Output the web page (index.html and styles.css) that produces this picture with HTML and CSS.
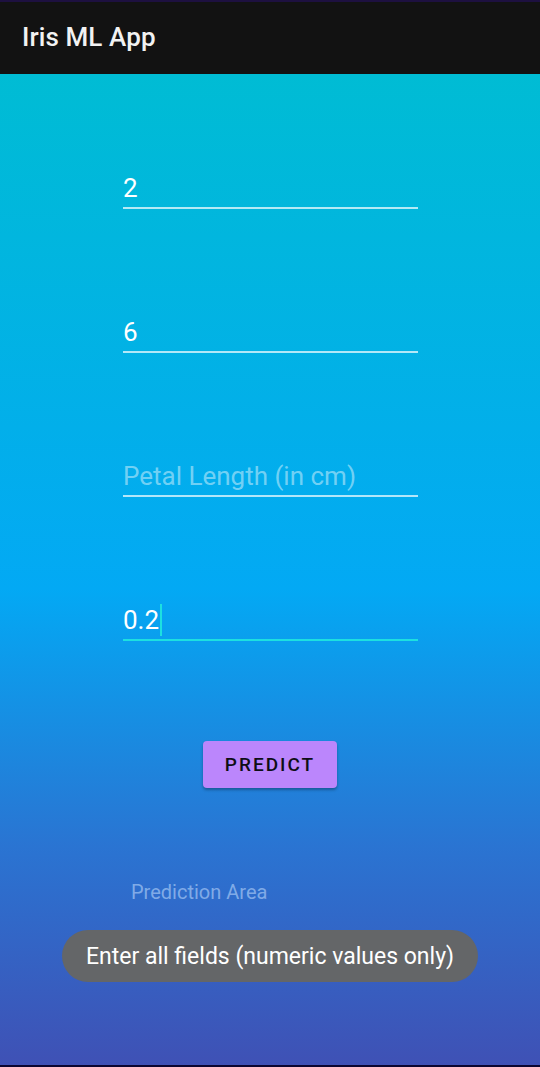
FILE: index.html
```html
<!DOCTYPE html>
<html>
<head>
<meta charset="utf-8">
<link rel="stylesheet" href="styles.css">
</head>
<body>
<div class="screen">
  <header class="appbar">
    <h1 class="title">Iris ML App</h1>
  </header>
  <main class="content">
    <div class="field"><span class="value">2</span></div>
    <div class="field"><span class="value">6</span></div>
    <div class="field"><span class="hint">Petal Length (in cm)</span></div>
    <div class="field focused"><span class="value">0.2</span><span class="caret"></span></div>
    <button class="predict">PREDICT</button>
    <div class="result">Prediction Area</div>
    <div class="toast">Enter all fields (numeric values only)</div>
  </main>
</div>
</body>
</html>
```
FILE: styles.css
```css
html, body {
  margin: 0;
  padding: 0;
  background: #0b0630;
}
.screen {
  width: 540px;
  height: 1067px;
  display: flex;
  flex-direction: column;
  font-family: Roboto, "Noto Sans", sans-serif;
  border-top: 2px solid #1d1040;
  border-bottom: 2px solid #0b0630;
  box-sizing: border-box;
}
.appbar {
  height: 72px;
  background: #121212;
  display: flex;
  align-items: center;
  padding-left: 22px;
  flex-shrink: 0;
}
.title {
  margin: 0;
  color: #f2f2f2;
  font-size: 26px;
  font-weight: 500;
  letter-spacing: 0.1px;
  position: relative;
  top: -1px;
}
.content {
  flex: 1;
  background: linear-gradient(180deg, #00bcd4 0%, #03a9f4 52%, #2a74d2 78%, #3f51b5 100%);
  display: flex;
  flex-direction: column;
  align-items: center;
  padding-top: 93px;
}
.field {
  width: 295px;
  height: 36px;
  border-bottom: 2px solid rgba(255,255,255,0.7);
  margin-bottom: 102px;
  display: flex;
  align-items: flex-end;
  padding-bottom: 4px;
  box-sizing: content-box;
  margin-left: 1px;
}
.field.focused {
  border-bottom: 2px solid #1de0e0;
  margin-bottom: 0;
}
.value, .hint {
  font-size: 26px;
  line-height: 30px;
  color: #ffffff;
}
.hint {
  color: rgba(255,255,255,0.45);
}
.caret {
  width: 2px;
  height: 32px;
  background: #1de0e0;
  margin-left: 1px;
  margin-bottom: -1px;
}
.predict {
  margin-top: 100px;
  width: 134px;
  height: 47px;
  background: #bb86fc;
  border: none;
  border-radius: 4px;
  font-family: Roboto, sans-serif;
  font-size: 19px;
  font-weight: 500;
  letter-spacing: 2px;
  color: #0e0e16;
  box-shadow: 0 2px 3px rgba(0,0,0,0.3);
  padding: 0;
}
.result {
  align-self: flex-start;
  margin-left: 131px;
  margin-top: 93px;
  font-size: 20px;
  line-height: 23px;
  color: rgba(200, 225, 255, 0.55);
}
.toast {
  margin-top: 26px;
  width: 416px;
  height: 52px;
  border-radius: 26px;
  background: #646668;
  color: #ffffff;
  font-size: 23px;
  display: flex;
  align-items: center;
  justify-content: center;
}
```
